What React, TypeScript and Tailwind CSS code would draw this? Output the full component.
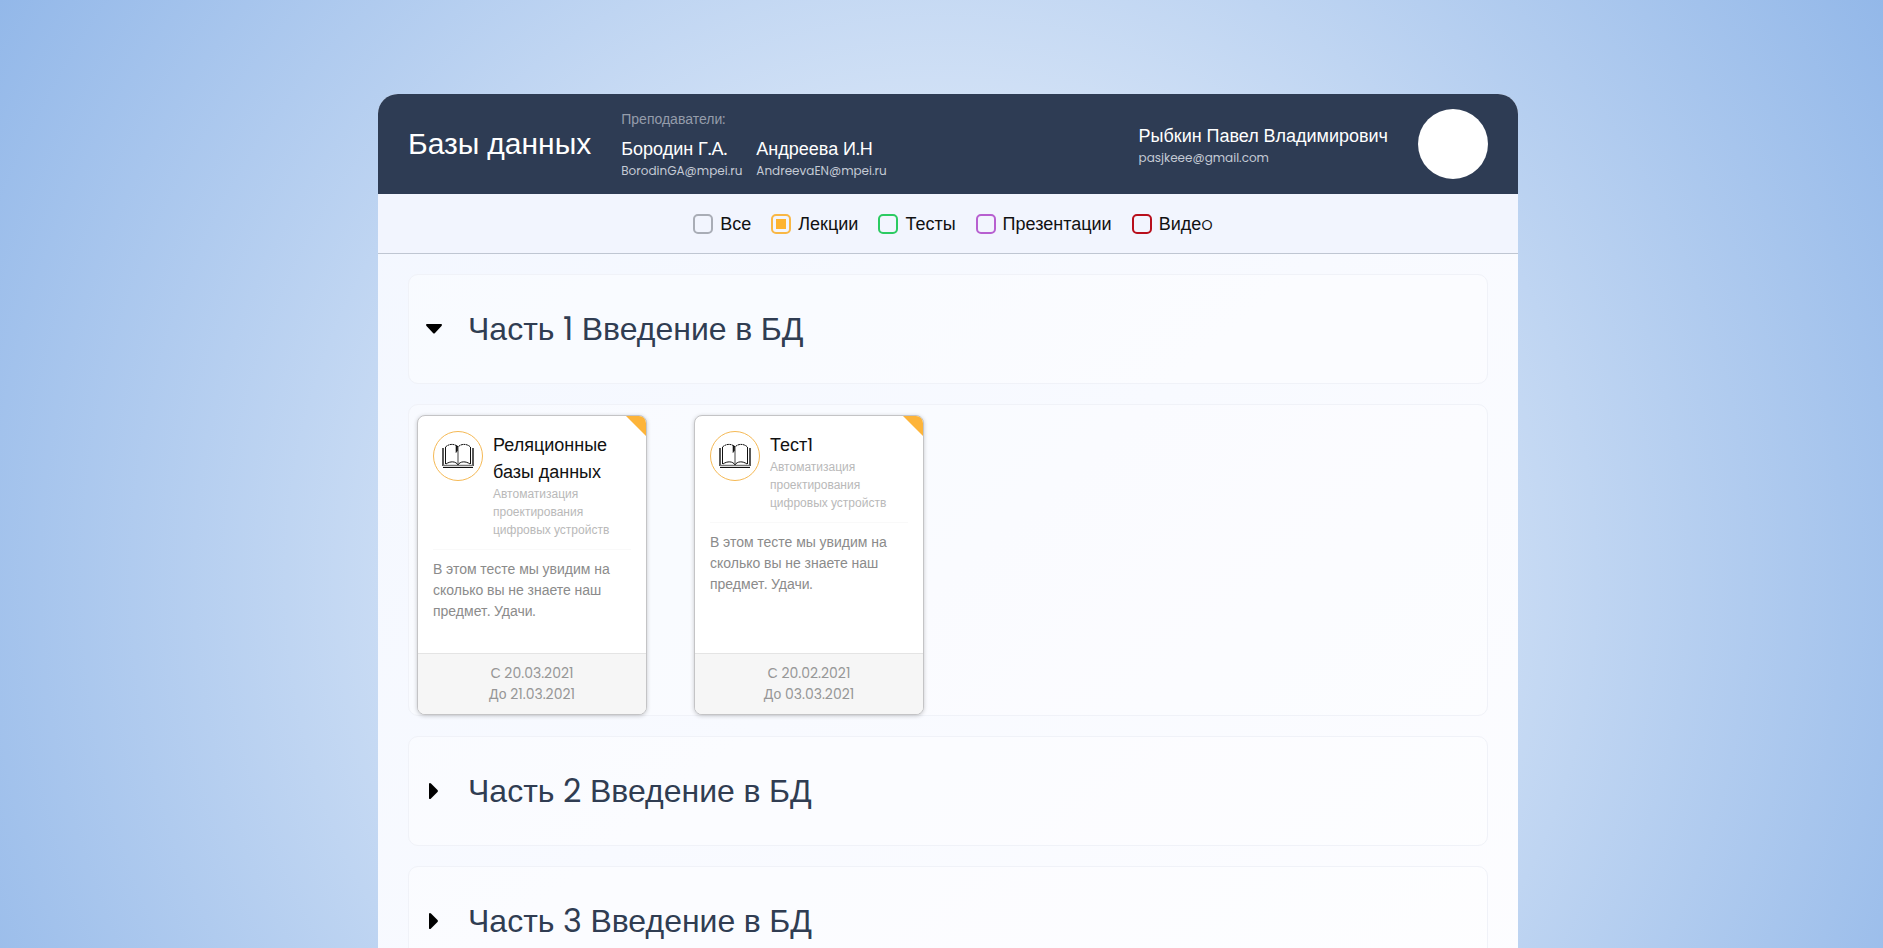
import { useState } from 'react'

const filters = [
  { id: 'all', label: 'Все', color: 'border-[#a9adb6] checked:bg-[#a9adb6]' },
  { id: 'lectures', label: 'Лекции', color: 'border-[#f9b745] checked:bg-[#fdb330]' },
  { id: 'tests', label: 'Тесты', color: 'border-[#2ccb62] checked:bg-[#2ccb62]' },
  { id: 'slides', label: 'Презентации', color: 'border-[#b75fd0] checked:bg-[#b75fd0]' },
  { id: 'video', label: 'Видеo', color: 'border-[#b80f1c] checked:bg-[#b80f1c]' },
]

const teachers = [
  { name: 'Бородин Г.А.', mail: 'BorodinGA@mpei.ru' },
  { name: 'Андреева И.Н', mail: 'AndreevaEN@mpei.ru' },
]

const lessons = [
  { title: 'Реляционные базы данных', from: 'С 20.03.2021', to: 'До 21.03.2021' },
  { title: 'Тест1', from: 'С 20.02.2021', to: 'До 03.03.2021' },
]

function BookIcon() {
  return (
    <svg viewBox="0 0 32 26" className="h-[26px] w-8" fill="none" stroke="#111" aria-hidden="true">
      <path d="M1 5v18M31 5v18" strokeWidth="1.400" />
      <path d="M3.500 4v17M28.500 4v17" strokeWidth="1" />
      <path d="M3.500 4C7 .5 13 .5 16 4c3-3.500 9-3.500 12.500 0" strokeWidth="1" strokeDasharray="2 0.500" />
      <path d="M16 4v18" strokeWidth="0.800" />
      <path d="M4 21c4-3 10-3 12 1 2-4 8-4 12-1" strokeWidth="1" />
      <path d="M1 22.500h30" stroke="#777" strokeWidth="1.500" />
      <path d="M1 24.500h30" strokeWidth="1.200" />
      <path d="M14 2.500v7l1.500-2V3z" fill="#111" strokeWidth="0.600" />
    </svg>
  )
}

function LessonCard({ lesson }: { lesson: (typeof lessons)[number] }) {
  return (
    <article className="relative flex h-[300px] w-[230px] flex-col overflow-hidden rounded-lg border border-[#c4c4c6] bg-white shadow-[0_1px_4px_rgba(0,0,0,0.2)]">
      <svg viewBox="0 0 20 20" className="absolute top-0 right-0 size-5" aria-hidden="true">
        <path d="M0 0h20v20z" fill="#fdb43a" />
      </svg>
      <div className="flex grow flex-col px-[15px] pt-[15px]">
        <div className="flex gap-[10px] border-b border-[#f9f9f9] pb-[10px]">
          <div className="flex size-[50px] shrink-0 items-center justify-center rounded-full border border-[#f5b955]">
            <BookIcon />
          </div>
          <div>
            <h3 className="text-lg leading-[27px] text-[#111]">{lesson.title}</h3>
            <p className="text-xs leading-[18px] text-[#b9b9b9]">Автоматизация проектирования цифровых устройств</p>
          </div>
        </div>
        <p className="pt-[9px] text-sm leading-[21px] text-[#8b8b8b]">
          В этом тесте мы увидим на сколько вы не знаете наш предмет. Удачи.
        </p>
      </div>
      <footer className="border-t border-[#e4e4e4] bg-[#f6f6f6] py-[9px] text-center text-sm leading-[21px] text-[#979797]">
        <p>{lesson.from}</p>
        <p>{lesson.to}</p>
      </footer>
    </article>
  )
}

function SectionHeader({ title, open, onToggle }: { title: string; open: boolean; onToggle: () => void }) {
  return (
    <h2 className="rounded-[10px] border border-[#f0f2f8] bg-white/40">
      <button
        type="button"
        aria-expanded={open}
        onClick={onToggle}
        className="flex h-[108px] w-full items-center gap-[25px] pl-4 text-left text-[32px] leading-[48px] text-[#303d52]"
      >
        <svg viewBox="0 0 18 18" className="size-[18px] shrink-0" fill="#000" aria-hidden="true">
          {open ? (
            <path d="M1.500 4h15q1 1 0 2l-6.500 7q-1 1-2 0L1.500 6q-1-1 0-2z" />
          ) : (
            <path d="M4 1.500q1-1 2 0l6.500 6.500q1 1 0 2L6 16.500q-1 1-2 0z" />
          )}
        </svg>
        {title}
      </button>
    </h2>
  )
}

export default function App() {
  const [active, setActive] = useState<string[]>(['lectures'])
  const [open, setOpen] = useState<number[]>([1])
  const toggle = (n: number) => setOpen((o) => (o.includes(n) ? o.filter((x) => x !== n) : [...o, n]))
  const toggleFilter = (id: string) => setActive((a) => (a.includes(id) ? a.filter((x) => x !== id) : [...a, id]))

  return (
    <div className="h-screen overflow-hidden bg-[radial-gradient(circle_at_50%_580px,#ffffff,#93b8e9)] pt-[94px] pl-[13px] font-['Poppins','Liberation_Sans',sans-serif]">
      <main className="mx-auto flex min-h-screen max-w-[1140px] flex-col overflow-hidden rounded-t-[20px] bg-linear-to-br from-[#f3f7ff] to-[#fdfdff]">
        <header className="flex h-[100px] shrink-0 items-center bg-[#2e3c54] px-[30px] text-white">
          <h1 className="mr-[30px] text-3xl">Базы данных</h1>
          <div>
            <p className="text-sm leading-[21px] text-[#959dab]">Преподаватели:</p>
            <div className="flex gap-[14px] pt-[5px]">
              {teachers.map((t) => (
                <div key={t.mail}>
                  <p className="text-lg leading-[27px]">{t.name}</p>
                  <p className="text-xs leading-[18px] text-[#c4cad4]">{t.mail}</p>
                </div>
              ))}
            </div>
          </div>
          <div className="mr-[30px] ml-auto">
            <p className="text-lg leading-[27px]">Рыбкин Павел Владимирович</p>
            <p className="text-xs leading-[18px] text-[#c4cad4]">pasjkeee@gmail.com</p>
          </div>
          <div className="size-[70px] rounded-full bg-white" />
        </header>
        <form className="flex h-[60px] shrink-0 items-center justify-center gap-5 border-b border-[#bfc6d2] bg-[#f2f5fe] pl-[10px]">
          {filters.map((f) => (
            <label key={f.id} className="flex items-center gap-[7px] text-lg font-light text-[#111]">
              <input
                type="checkbox"
                checked={active.includes(f.id)}
                onChange={() => toggleFilter(f.id)}
                className={`size-5 appearance-none rounded-[5px] border-2 bg-clip-content p-[3px] ${f.color}`}
              />
              {f.label}
            </label>
          ))}
        </form>
        <div className="flex flex-col gap-5 px-[30px] pt-5">
          {[1, 2, 3].map((n) => (
            <section key={n} className="flex flex-col gap-5">
              <SectionHeader title={`Часть ${n} Введение в БД`} open={open.includes(n)} onToggle={() => toggle(n)} />
              {n === 1 && open.includes(1) && (
                <div className="flex gap-[47px] rounded-[10px] border border-[#f0f2f8] bg-white/30 px-2 pt-[10px]">
                  {lessons.map((l) => (
                    <LessonCard key={l.title} lesson={l} />
                  ))}
                </div>
              )}
            </section>
          ))}
        </div>
      </main>
    </div>
  )
}
